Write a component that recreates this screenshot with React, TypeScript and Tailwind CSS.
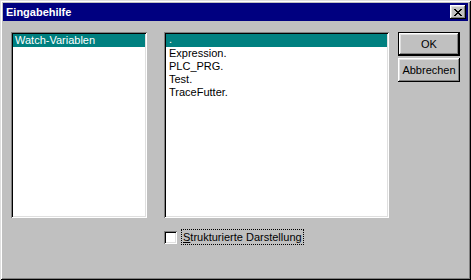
export default function App() {
  const raised =
    'shadow-[inset_-1px_-1px_0_#000,inset_1px_1px_0_#fff,inset_-2px_-2px_0_#808080,inset_2px_2px_0_#dfdfdf]'
  const sunken =
    'shadow-[inset_1px_1px_0_#808080,inset_-1px_-1px_0_#fff,inset_2px_2px_0_#000,inset_-2px_-2px_0_#dfdfdf]'
  const items = ['Expression.', 'PLC_PRG.', 'Test.', 'TraceFutter.']

  return (
    <div
      className="w-[471px] h-[280px] bg-[#c0c0c0] p-[3px] text-[11px] text-black shadow-[inset_1px_1px_0_#dfdfdf,inset_-1px_-1px_0_#000,inset_2px_2px_0_#fff,inset_-2px_-2px_0_#808080]"
      style={{ fontFamily: '"Liberation Sans", Arial, sans-serif' }}
    >
      <div className="h-[18px] bg-[#000080] flex items-center justify-between pl-[3px] pr-[2px]">
        <span className="text-white font-bold text-[11px] leading-none">Eingabehilfe</span>
        <div className={`w-[16px] h-[14px] bg-[#c0c0c0] flex items-center justify-center ${raised}`}>
          <svg width="8" height="7" viewBox="0 0 8 7" shapeRendering="crispEdges">
            <path d="M0 0h2v1h-2zM6 0h2v1h-2zM1 1h2v1h-2zM5 1h2v1h-2zM2 2h4v1h-4zM3 3h2v1h-2zM2 4h4v1h-4zM1 5h2v1h-2zM5 5h2v1h-2zM0 6h2v1h-2zM6 6h2v1h-2z" fill="#000" />
          </svg>
        </div>
      </div>

      <div className="flex pl-[8px] pt-[11px]">
        <div className={`w-[136px] h-[186px] bg-white p-[2px] ${sunken}`}>
          <div className="h-[13px] bg-[#008080] text-white pl-[2px] leading-[13px]">Watch-Variablen</div>
        </div>

        <div className="ml-[17px] flex flex-col">
          <div className={`w-[225px] h-[186px] bg-white p-[2px] ${sunken}`}>
            <div className="h-[13px] bg-[#008080] text-white pl-[3px] leading-[11px]">.</div>
            {items.map((it) => (
              <div key={it} className="h-[13px] pl-[3px] leading-[13px]">
                {it}
              </div>
            ))}
          </div>
          <div className="flex items-center mt-[11px]">
            <div className={`w-[13px] h-[13px] bg-white ${sunken}`} />
            <span className="ml-[4px] border border-dotted border-black px-[1px] leading-[14px]">
              <span className="underline">S</span>trukturierte Darstellung
            </span>
          </div>
        </div>

        <div className="ml-[9px] flex flex-col gap-[2px]">
          <div className="w-[62px] h-[24px] border border-black">
            <div className={`w-full h-full bg-[#c0c0c0] flex items-center justify-center ${raised}`}>OK</div>
          </div>
          <div className={`w-[62px] h-[24px] bg-[#c0c0c0] flex items-center justify-center ${raised}`}>
            Abbrechen
          </div>
        </div>
      </div>
    </div>
  )
}
